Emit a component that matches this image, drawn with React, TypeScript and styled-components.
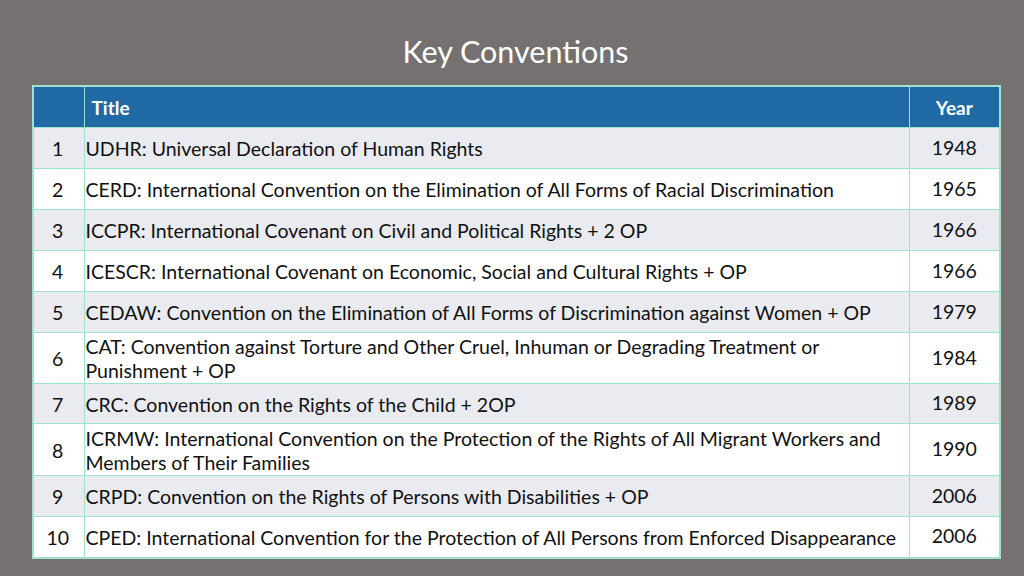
import React from "react";
import styled, { createGlobalStyle } from "styled-components";

const Global = createGlobalStyle`
  html, body { margin: 0; padding: 0; }
  body { background: #767171; font-family: Lato, "Open Sans", sans-serif; }
`;

const Slide = styled.div`
  width: 1024px;
  height: 576px;
  box-sizing: border-box;
  padding: 33px 25px 0 32px;
  display: flex;
  flex-direction: column;
  align-items: stretch;
`;

const Heading = styled.h1`
  margin: 0 0 16px 0;
  height: 36px;
  line-height: 36px;
  text-align: center;
  font-weight: 400;
  font-size: 30.5px;
  color: #ffffff;
  letter-spacing: 0;
`;

const Table = styled.table`
  width: 967px;
  border-collapse: collapse;
  border: 2px solid #9fe3cf;
  table-layout: fixed;
`;

const HeadCell = styled.th<{ $align?: string }>`
  background: #1f6aa5;
  color: #ffffff;
  font-weight: 700;
  font-size: 19px;
  height: 40px;
  padding: 0 0 0 ${(p) => (p.$align === "left" ? "7px" : "0")};
  text-align: ${(p) => p.$align || "center"};
  border: 1.5px solid #9fe3cf;
`;

const Row = styled.tr<{ $odd: boolean }>`
  background: ${(p) => (p.$odd ? "#e9ebf0" : "#ffffff")};
`;

const Cell = styled.td<{ $align?: string; $h: number }>`
  height: ${(p) => p.$h}px;
  box-sizing: border-box;
  padding: 2px 2px 0 ${(p) => (p.$align === "left" ? "1px" : "0")};
  text-align: ${(p) => p.$align || "center"};
  font-size: 19.5px;
  line-height: 24px;
  color: #111;
  border: 1.5px solid #9fe3cf;
  vertical-align: middle;
`;

const YearCell = styled(Cell)`
  padding: 0 0 1px 0;
`;

const rows: [string, string, number][] = [
  ["UDHR: Universal Declaration of Human Rights", "1948", 41],
  ["CERD: International Convention on the Elimination of All Forms of Racial Discrimination", "1965", 41],
  ["ICCPR: International Covenant on Civil and Political Rights + 2 OP", "1966", 41],
  ["ICESCR: International Covenant on Economic, Social and Cultural Rights + OP", "1966", 41],
  ["CEDAW: Convention on the Elimination of All Forms of Discrimination against Women + OP", "1979", 41],
  ["CAT: Convention against Torture and Other Cruel, Inhuman or Degrading Treatment or Punishment + OP", "1984", 51],
  ["CRC: Convention on the Rights of the Child + 2OP", "1989", 40],
  ["ICRMW: International Convention on the Protection of the Rights of All Migrant Workers and Members of Their Families", "1990", 52],
  ["CRPD: Convention on the Rights of Persons with Disabilities + OP", "2006", 41],
  ["CPED: International Convention for the Protection of All Persons from Enforced Disappearance", "2006", 41],
];

export default function App() {
  return (
    <>
      <Global />
      <Slide>
        <Heading>Key Conventions</Heading>
        <Table>
          <colgroup>
            <col style={{ width: 51 }} />
            <col style={{ width: 825 }} />
            <col style={{ width: 91 }} />
          </colgroup>
          <thead>
            <tr>
              <HeadCell />
              <HeadCell $align="left">Title</HeadCell>
              <HeadCell>Year</HeadCell>
            </tr>
          </thead>
          <tbody>
            {rows.map(([title, year, h], i) => (
              <Row key={i} $odd={i % 2 === 0}>
                <Cell $h={h}>{i + 1}</Cell>
                <Cell $h={h} $align="left">{title}</Cell>
                <YearCell $h={h}>{year}</YearCell>
              </Row>
            ))}
          </tbody>
        </Table>
      </Slide>
    </>
  );
}
